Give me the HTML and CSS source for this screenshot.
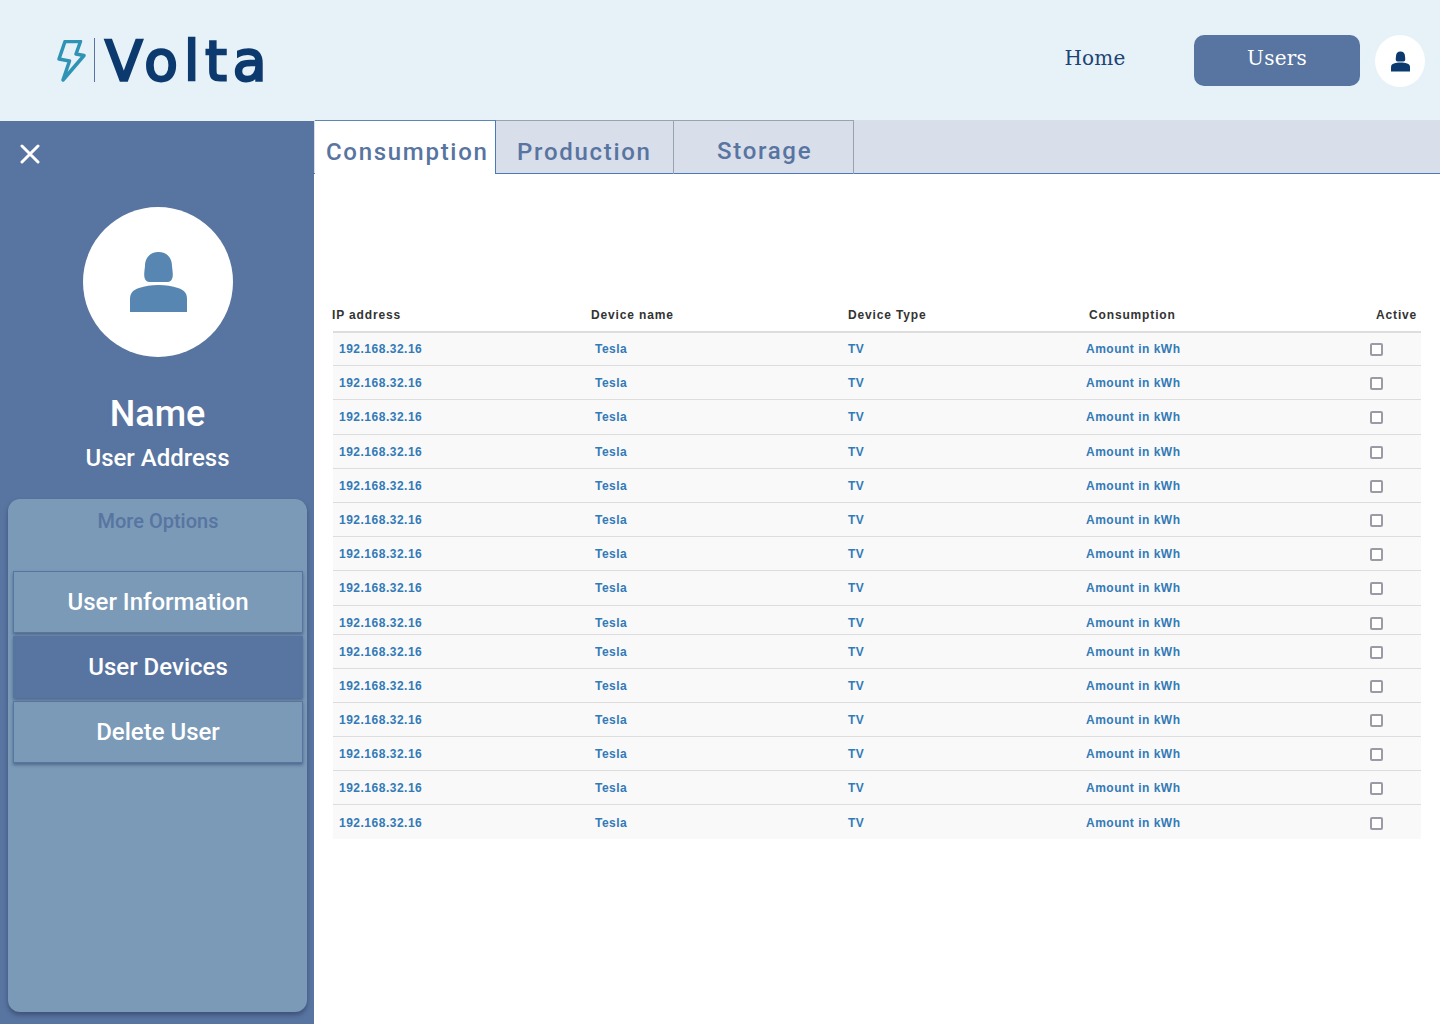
FILE: index.html
```html
<!DOCTYPE html>
<html lang="en">
<head>
  <meta charset="UTF-8" />
  <meta name="viewport" content="width=device-width, initial-scale=1" />
  <title>Volta - User Devices</title>
  <link rel="stylesheet" href="styles.css">
</head>
<body>

  <header class="topbar">
    <div class="logo">
      <svg class="logo-bolt" viewBox="0 0 32 46" width="32" height="46">
        <polygon points="10,1.5 25.5,1.5 21,14 29,15.5 8,40 14.5,21 4,19" fill="none" stroke="#2f93b6" stroke-width="3.5" stroke-linejoin="round" />
      </svg>
      <span class="logo-divider"></span>
      <span class="logo-text">Volta</span>
    </div>
    <nav class="topnav">
      <a class="nav-link" href="#">Home</a>
      <a class="nav-link nav-active" href="#">Users</a>
      <button class="profile-btn" type="button">
        <svg viewBox="0 0 57 60" width="19" height="21">
          <path fill="#0d3a6e" d="M28.5 0C37 0 42 6 42 14C42.5 19 43.5 24 42 27C41 29.5 39 30 36 30H21C18 30 16 29.5 15 27C13.5 24 14.5 19 15 14C15 6 20 0 28.5 0Z" />
          <path fill="#0d3a6e" d="M0 60V47C0 41 3 38 9 36C15 34 21 33 28.5 33C36 33 42 34 48 36C54 38 57 41 57 47V60Z" />
        </svg>
      </button>
    </nav>
  </header>

  <div class="layout">
    <aside class="sidebar">
      <button class="close-btn" type="button">
        <svg viewBox="0 0 20 20" width="20" height="20">
          <path d="M2 2L18 18M18 2L2 18" stroke="#fff" stroke-width="3" stroke-linecap="round" />
        </svg>
      </button>
      <div class="avatar">
        <svg viewBox="0 0 57 60" width="57" height="60">
          <path fill="#5686b1" d="M28.5 0C37 0 42 6 42 14C42.5 19 43.5 24 42 27C41 29.5 39 30 36 30H21C18 30 16 29.5 15 27C13.5 24 14.5 19 15 14C15 6 20 0 28.5 0Z" />
          <path fill="#5686b1" d="M0 60V47C0 41 3 38 9 36C15 34 21 33 28.5 33C36 33 42 34 48 36C54 38 57 41 57 47V60Z" />
        </svg>
      </div>
      <h2 class="user-name">Name</h2>
      <p class="user-address">User Address</p>

      <section class="options">
        <h3 class="options-title">More Options</h3>
        <a class="option" href="#">User Information</a>
        <a class="option option-active" href="#">User Devices</a>
        <a class="option" href="#">Delete User</a>
      </section>
    </aside>

    <main class="content">
      <div class="tabs">
        <a class="tab tab-active" href="#">Consumption</a>
        <a class="tab tab-production" href="#">Production</a>
        <a class="tab tab-storage" href="#">Storage</a>
      </div>

      <table class="devices">
        <thead>
          <tr>
            <th>IP address</th>
            <th>Device name</th>
            <th>Device Type</th>
            <th>Consumption</th>
            <th>Active</th>
          </tr>
        </thead>
        <tbody>
          <tr><td>192.168.32.16</td><td>Tesla</td><td>TV</td><td>Amount in kWh</td><td><input type="checkbox" /></td></tr>
          <tr><td>192.168.32.16</td><td>Tesla</td><td>TV</td><td>Amount in kWh</td><td><input type="checkbox" /></td></tr>
          <tr><td>192.168.32.16</td><td>Tesla</td><td>TV</td><td>Amount in kWh</td><td><input type="checkbox" /></td></tr>
          <tr><td>192.168.32.16</td><td>Tesla</td><td>TV</td><td>Amount in kWh</td><td><input type="checkbox" /></td></tr>
          <tr><td>192.168.32.16</td><td>Tesla</td><td>TV</td><td>Amount in kWh</td><td><input type="checkbox" /></td></tr>
          <tr><td>192.168.32.16</td><td>Tesla</td><td>TV</td><td>Amount in kWh</td><td><input type="checkbox" /></td></tr>
          <tr><td>192.168.32.16</td><td>Tesla</td><td>TV</td><td>Amount in kWh</td><td><input type="checkbox" /></td></tr>
          <tr><td>192.168.32.16</td><td>Tesla</td><td>TV</td><td>Amount in kWh</td><td><input type="checkbox" /></td></tr>
          <tr class="row-cut"><td>192.168.32.16</td><td>Tesla</td><td>TV</td><td>Amount in kWh</td><td><input type="checkbox" /></td></tr>
          <tr><td>192.168.32.16</td><td>Tesla</td><td>TV</td><td>Amount in kWh</td><td><input type="checkbox" /></td></tr>
          <tr><td>192.168.32.16</td><td>Tesla</td><td>TV</td><td>Amount in kWh</td><td><input type="checkbox" /></td></tr>
          <tr><td>192.168.32.16</td><td>Tesla</td><td>TV</td><td>Amount in kWh</td><td><input type="checkbox" /></td></tr>
          <tr><td>192.168.32.16</td><td>Tesla</td><td>TV</td><td>Amount in kWh</td><td><input type="checkbox" /></td></tr>
          <tr><td>192.168.32.16</td><td>Tesla</td><td>TV</td><td>Amount in kWh</td><td><input type="checkbox" /></td></tr>
          <tr><td>192.168.32.16</td><td>Tesla</td><td>TV</td><td>Amount in kWh</td><td><input type="checkbox" /></td></tr>
        </tbody>
      </table>
    </main>
  </div>

</body>
</html>
```

FILE: styles.css
```css
* {
  box-sizing: border-box;
}
body {
  margin: 0;
  height: 1024px;
  overflow: hidden;
  background: #fff;
  font-family: Roboto, Arial, sans-serif;
}
a {
  text-decoration: none;
}
button {
  border: 0;
  padding: 0;
  background: none;
}

/* top bar */
.topbar {
  height: 120px;
  background: #e6f2f8;
  display: flex;
  justify-content: space-between;
  align-items: flex-start;
  padding: 35px 15px 0 55px;
}
.logo {
  display: flex;
  align-items: center;
  height: 52px;
}
.logo-bolt {
  display: block;
  margin-top: 3px;
}
.logo-divider {
  width: 1px;
  height: 44px;
  margin: 0 0 2px 7px;
  background: #5874a0;
}
.logo-text {
  margin: 0 0 0 10px;
  font-family: "DejaVu Sans", sans-serif;
  font-size: 55px;
  font-weight: 400;
  letter-spacing: 6px;
  line-height: 52px;
  color: #0d3a6e;
  -webkit-text-stroke: 2.5px #0d3a6e;
}
.topnav {
  display: flex;
  align-items: flex-start;
}
.nav-link {
  width: 166px;
  height: 51px;
  border-radius: 10px;
  text-align: center;
  font-family: "DejaVu Serif", serif;
  font-size: 20px;
  letter-spacing: 0.2px;
  line-height: 47px;
  color: #1c4474;
}
.nav-active {
  background: #5874a0;
  color: #fff;
}
.nav-link:first-child {
  margin-right: 16px;
}
.profile-btn {
  width: 50px;
  height: 52px;
  margin-left: 15px;
  border-radius: 50%;
  background: #fff;
  display: flex;
  align-items: center;
  justify-content: center;
}

/* page layout */
.layout {
  display: flex;
  height: 904px;
}
.sidebar {
  width: 314px;
  flex-shrink: 0;
  border-top: 1px solid #e6f2f8;
  background: #5874a0;
  padding: 0 7px 0 8px;
  display: flex;
  flex-direction: column;
  align-items: center;
}
.close-btn {
  align-self: flex-start;
  width: 20px;
  height: 20px;
  margin: 23px 0 0 12px;
}
.avatar {
  width: 150px;
  height: 150px;
  margin-top: 43px;
  padding-left: 2px;
  border-radius: 50%;
  background: #fff;
  display: flex;
  align-items: center;
  justify-content: center;
}
.user-name {
  margin: 35px 0 0;
  font-size: 36px;
  font-weight: 500;
  line-height: 44px;
  color: #fff;
}
.user-address {
  margin: 7px 0 0;
  font-size: 24px;
  font-weight: 500;
  line-height: 30px;
  color: #fff;
}
.options {
  align-self: stretch;
  height: 513px;
  margin-top: 26px;
  padding: 0 4px 0 5px;
  border-radius: 12px;
  background: #7a9ab8;
  box-shadow: 0 3px 4px rgba(40, 55, 90, 0.55);
}
.options-title {
  margin: 9px 0 37px;
  font-size: 20px;
  font-weight: 500;
  line-height: 26px;
  text-align: center;
  color: #5874a0;
}
.option {
  display: block;
  height: 62px;
  margin-bottom: 3px;
  border: 1px solid #5874a0;
  background: #7a9ab8;
  box-shadow: 0 2px 3px rgba(40, 55, 90, 0.5);
  font-size: 24px;
  font-weight: 500;
  line-height: 60px;
  text-align: center;
  color: #fff;
}
.option-active {
  background: #5874a0;
}

/* tabs */
.content {
  flex: 1;
  min-width: 0;
}
.tabs {
  display: flex;
  height: 54px;
  padding-left: 1px;
  background: #d8deea;
  border-bottom: 1px solid #4a78b8;
}
.tab {
  height: 54px;
  border-top: 1px solid #9aa2b0;
  border-right: 1px solid #9aa2b0;
  font-size: 24px;
  font-weight: 500;
  letter-spacing: 1.7px;
  line-height: 63px;
  color: #5874a0;
}
.tab-active {
  width: 181px;
  padding-left: 11px;
  background: #fff;
  border-top-color: #5a86b8;
  border-right-color: #4a78b8;
}
.tab-production {
  width: 178px;
  padding-left: 21px;
}
.tab-storage {
  width: 180px;
  padding-left: 43px;
  line-height: 61px;
}

/* device table */
.devices {
  width: 1088px;
  margin: 126.5px 0 0 19px;
  border-collapse: collapse;
  table-layout: fixed;
  font-family: "Liberation Sans", Arial, sans-serif;
  font-size: 12px;
  font-weight: 700;
  letter-spacing: 0.5px;
}
.devices th {
  height: 31px;
  padding: 0 0 2px;
  text-align: left;
  color: #333;
  letter-spacing: 0.85px;
  border-bottom: 2px solid #ddd;
}
.devices th:nth-child(1) { width: 256px; text-indent: -1px; }
.devices th:nth-child(2) { width: 253px; padding-left: 2px; }
.devices th:nth-child(3) { width: 238px; padding-left: 6px; }
.devices th:nth-child(4) { width: 284px; padding-left: 9px; }
.devices th:nth-child(5) { padding-left: 12px; }
.devices td {
  height: 34.2px;
  padding: 1px 0 0 6px;
  background: #f9f9f9;
  color: #337ab7;
  border-top: 1px solid #ddd;
  vertical-align: middle;
  white-space: nowrap;
}
.devices tbody tr:first-child td {
  border-top: 0;
}
.devices .row-cut td {
  height: 29px;
  padding-top: 6px;
}
.devices input {
  appearance: none;
  display: block;
  width: 13px;
  height: 13px;
  margin: 1px 0 0;
  border: 2px solid #9b9ba6;
  border-radius: 2px;
  background: #fff;
}
```
